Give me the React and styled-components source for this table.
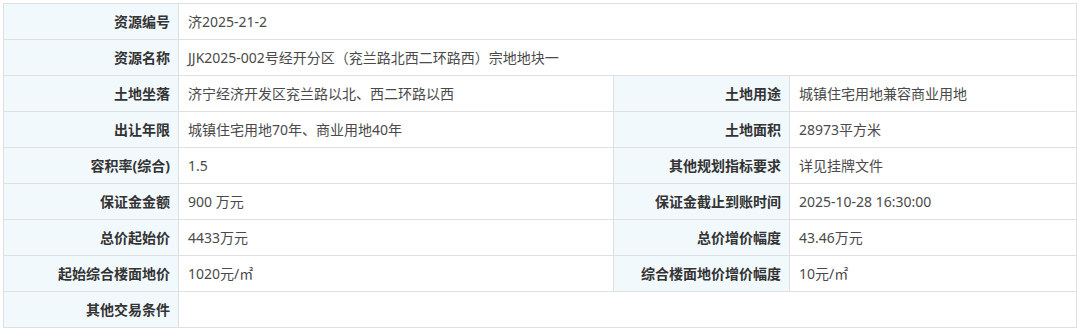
import React from "react";
import styled, { createGlobalStyle } from "styled-components";

const Global = createGlobalStyle`
  html, body { margin: 0; padding: 0; background: #fff; }
  body { font-family: "Noto Sans", "Noto Sans CJK SC", sans-serif; }
`;

const Wrap = styled.div`
  padding: 3px 0 0 3px;
`;

const Table = styled.table`
  width: 1073px;
  table-layout: fixed;
  border-collapse: collapse;
  font-size: 14px;
  line-height: 20px;
`;

const Col = styled.col`
  width: ${(p) => p.$w}px;
`;

const Row = styled.tr`
  height: 36px;
`;

const Label = styled.th`
  background: #f2f9fd;
  border: 1px solid #e0e0e0;
  color: #333;
  font-weight: 700;
  text-align: right;
  padding: 0 8px 0 6px;
  white-space: nowrap;
`;

const Value = styled.td`
  background: #fff;
  border: 1px solid #e0e0e0;
  color: #4a4a4a;
  font-weight: 400;
  text-align: left;
  padding: 0 9px;
  white-space: nowrap;
`;

const widths = [175, 435, 176, 287];

const rows = [
  [["资源编号", "济2025-21-2"]],
  [["资源名称", "JJK2025-002号经开分区（兖兰路北西二环路西）宗地地块一"]],
  [["土地坐落", "济宁经济开发区兖兰路以北、西二环路以西"], ["土地用途", "城镇住宅用地兼容商业用地"]],
  [["出让年限", "城镇住宅用地70年、商业用地40年"], ["土地面积", "28973平方米"]],
  [["容积率(综合)", "1.5"], ["其他规划指标要求", "详见挂牌文件"]],
  [["保证金金额", "900 万元"], ["保证金截止到账时间", "2025-10-28 16:30:00"]],
  [["总价起始价", "4433万元"], ["总价增价幅度", "43.46万元"]],
  [["起始综合楼面地价", "1020元/㎡"], ["综合楼面地价增价幅度", "10元/㎡"]],
  [["其他交易条件", ""]],
];

export default function App() {
  return (
    <>
      <Global />
      <Wrap>
        <Table>
          <colgroup>
            {widths.map((w, i) => (
              <Col key={i} $w={w} />
            ))}
          </colgroup>
          <tbody>
            {rows.map((pairs, i) => (
              <Row key={i}>
                {pairs.map(([l, v], j) => (
                  <React.Fragment key={j}>
                    <Label>{l}</Label>
                    <Value colSpan={pairs.length === 1 ? 3 : 1}>{v}</Value>
                  </React.Fragment>
                ))}
              </Row>
            ))}
          </tbody>
        </Table>
      </Wrap>
    </>
  );
}
